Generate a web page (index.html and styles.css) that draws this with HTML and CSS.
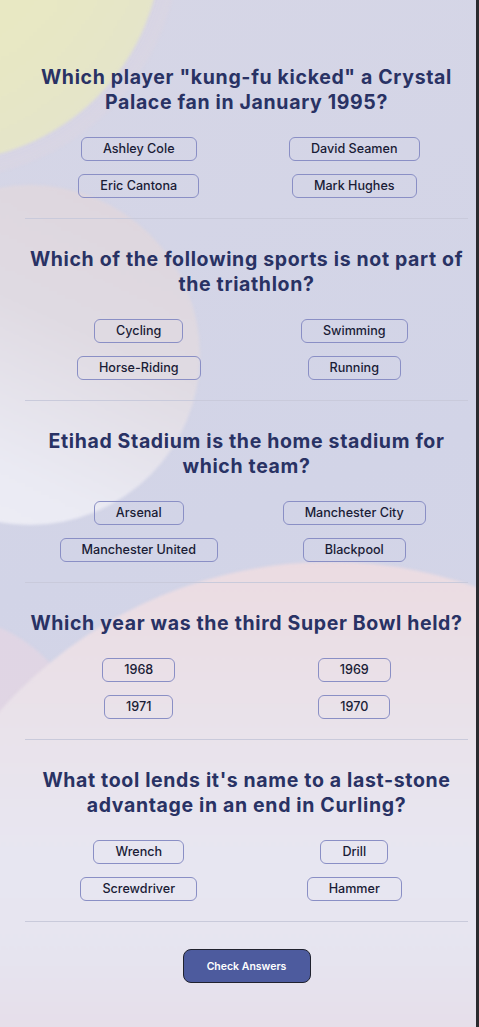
FILE: index.html
```html
<!DOCTYPE html>
<html lang="en">
<head>
<meta charset="utf-8">
<title>Quizzical</title>
<link rel="stylesheet" href="styles.css">
</head>
<body>
<div class="page">
  <div class="blob blob-yellow-ring"></div>
  <div class="blob blob-yellow"></div>
  <div class="blob blob-mid"></div>
  <div class="blob blob-small"></div>
  <div class="blob blob-big"></div>

  <main class="quiz">
    <section class="question">
      <h2 class="question-title">Which player "kung-fu kicked" a Crystal Palace fan in January 1995?</h2>
      <div class="answers">
        <button class="answer">Ashley Cole</button>
        <button class="answer">David Seamen</button>
        <button class="answer">Eric Cantona</button>
        <button class="answer">Mark Hughes</button>
      </div>
    </section>

    <section class="question">
      <h2 class="question-title">Which of the following sports is not part of the triathlon?</h2>
      <div class="answers">
        <button class="answer">Cycling</button>
        <button class="answer">Swimming</button>
        <button class="answer">Horse-Riding</button>
        <button class="answer">Running</button>
      </div>
    </section>

    <section class="question">
      <h2 class="question-title">Etihad Stadium is the home stadium for which team?</h2>
      <div class="answers">
        <button class="answer">Arsenal</button>
        <button class="answer">Manchester City</button>
        <button class="answer">Manchester United</button>
        <button class="answer">Blackpool</button>
      </div>
    </section>

    <section class="question">
      <h2 class="question-title">Which year was the third Super Bowl held?</h2>
      <div class="answers">
        <button class="answer">1968</button>
        <button class="answer">1969</button>
        <button class="answer">1971</button>
        <button class="answer">1970</button>
      </div>
    </section>

    <section class="question">
      <h2 class="question-title">What tool lends it's name to a last-stone advantage in an end in Curling?</h2>
      <div class="answers">
        <button class="answer">Wrench</button>
        <button class="answer">Drill</button>
        <button class="answer">Screwdriver</button>
        <button class="answer">Hammer</button>
      </div>
    </section>

    <div class="actions">
      <button class="check-btn">Check Answers</button>
    </div>
  </main>
</div>
</body>
</html>
```

FILE: styles.css
```css
html {
  background: #2a2a2e;
}

body {
  margin: 0;
  font-family: Inter, "Noto Sans", sans-serif;
}

.page {
  position: relative;
  width: 476px;
  min-height: 1027px;
  overflow: hidden;
  background: linear-gradient(160deg, #d6d6e6 0%, #d2d4e7 50%, #d6d6e8 100%);
}

.blob {
  position: absolute;
  border-radius: 50%;
  filter: blur(1.5px);
  z-index: 0;
}

.blob-yellow-ring {
  left: -300px;
  top: -300px;
  width: 480px;
  height: 480px;
  background: radial-gradient(circle, rgba(236, 214, 218, 0) 40%, rgba(236, 214, 218, 0.3) 100%);
}

.blob-yellow {
  left: -282px;
  top: -282px;
  width: 444px;
  height: 444px;
  background: radial-gradient(circle at 40% 40%, #ebebbf 0%, #e7e7c4 55%, #e1e1cf 100%);
}

.blob-mid {
  left: -140px;
  top: 185px;
  width: 340px;
  height: 340px;
  background: linear-gradient(205deg, #ddd4dc 0%, #dfdae2 40%, #eaeaf3 75%, #eeeef6 100%);
}

.blob-small {
  left: -210px;
  top: 615px;
  width: 300px;
  height: 300px;
  background: rgba(230, 214, 226, 0.7);
}

.blob-big {
  left: -110px;
  top: 562px;
  width: 880px;
  height: 880px;
  background: linear-gradient(180deg, #ebdbe1 0%, #e9e2ea 18%, #e7e6f1 34%, #e6e4ef 45%, #e6d9e5 60%);
}

.quiz {
  position: relative;
  z-index: 1;
  width: 443px;
  margin-left: 25px;
  padding-top: 37px;
}

.question {
  padding: 28px 0 20px;
  border-bottom: 1px solid #c9cadb;
  display: flex;
  flex-direction: column;
  gap: 22px;
}

.question-title {
  margin: 0;
  font-family: Inter, "Noto Sans", sans-serif;
  font-weight: 700;
  font-size: 19.5px;
  line-height: 25px;
  letter-spacing: 0.65px;
  color: #293264;
  text-align: center;
}

.answers {
  display: grid;
  grid-template-columns: 1fr 1fr;
  row-gap: 13px;
  padding: 0 6px;
}

.answer {
  justify-self: center;
  font-family: Inter, "Noto Sans", sans-serif;
  font-weight: 500;
  font-size: 12.6px;
  line-height: 16px;
  color: #1a1c36;
  background: transparent;
  border: 1px solid #8a8fc5;
  border-radius: 6px;
  padding: 3px 21px;
  cursor: pointer;
}

.actions {
  display: flex;
  justify-content: center;
  padding: 27px 0 44px;
}

.check-btn {
  width: 128px;
  height: 34px;
  font-family: Inter, "Noto Sans", sans-serif;
  font-weight: 600;
  font-size: 10.5px;
  color: #ffffff;
  background: #4d5b9e;
  border: 1px solid #20222e;
  border-radius: 8px;
  cursor: pointer;
}
```
